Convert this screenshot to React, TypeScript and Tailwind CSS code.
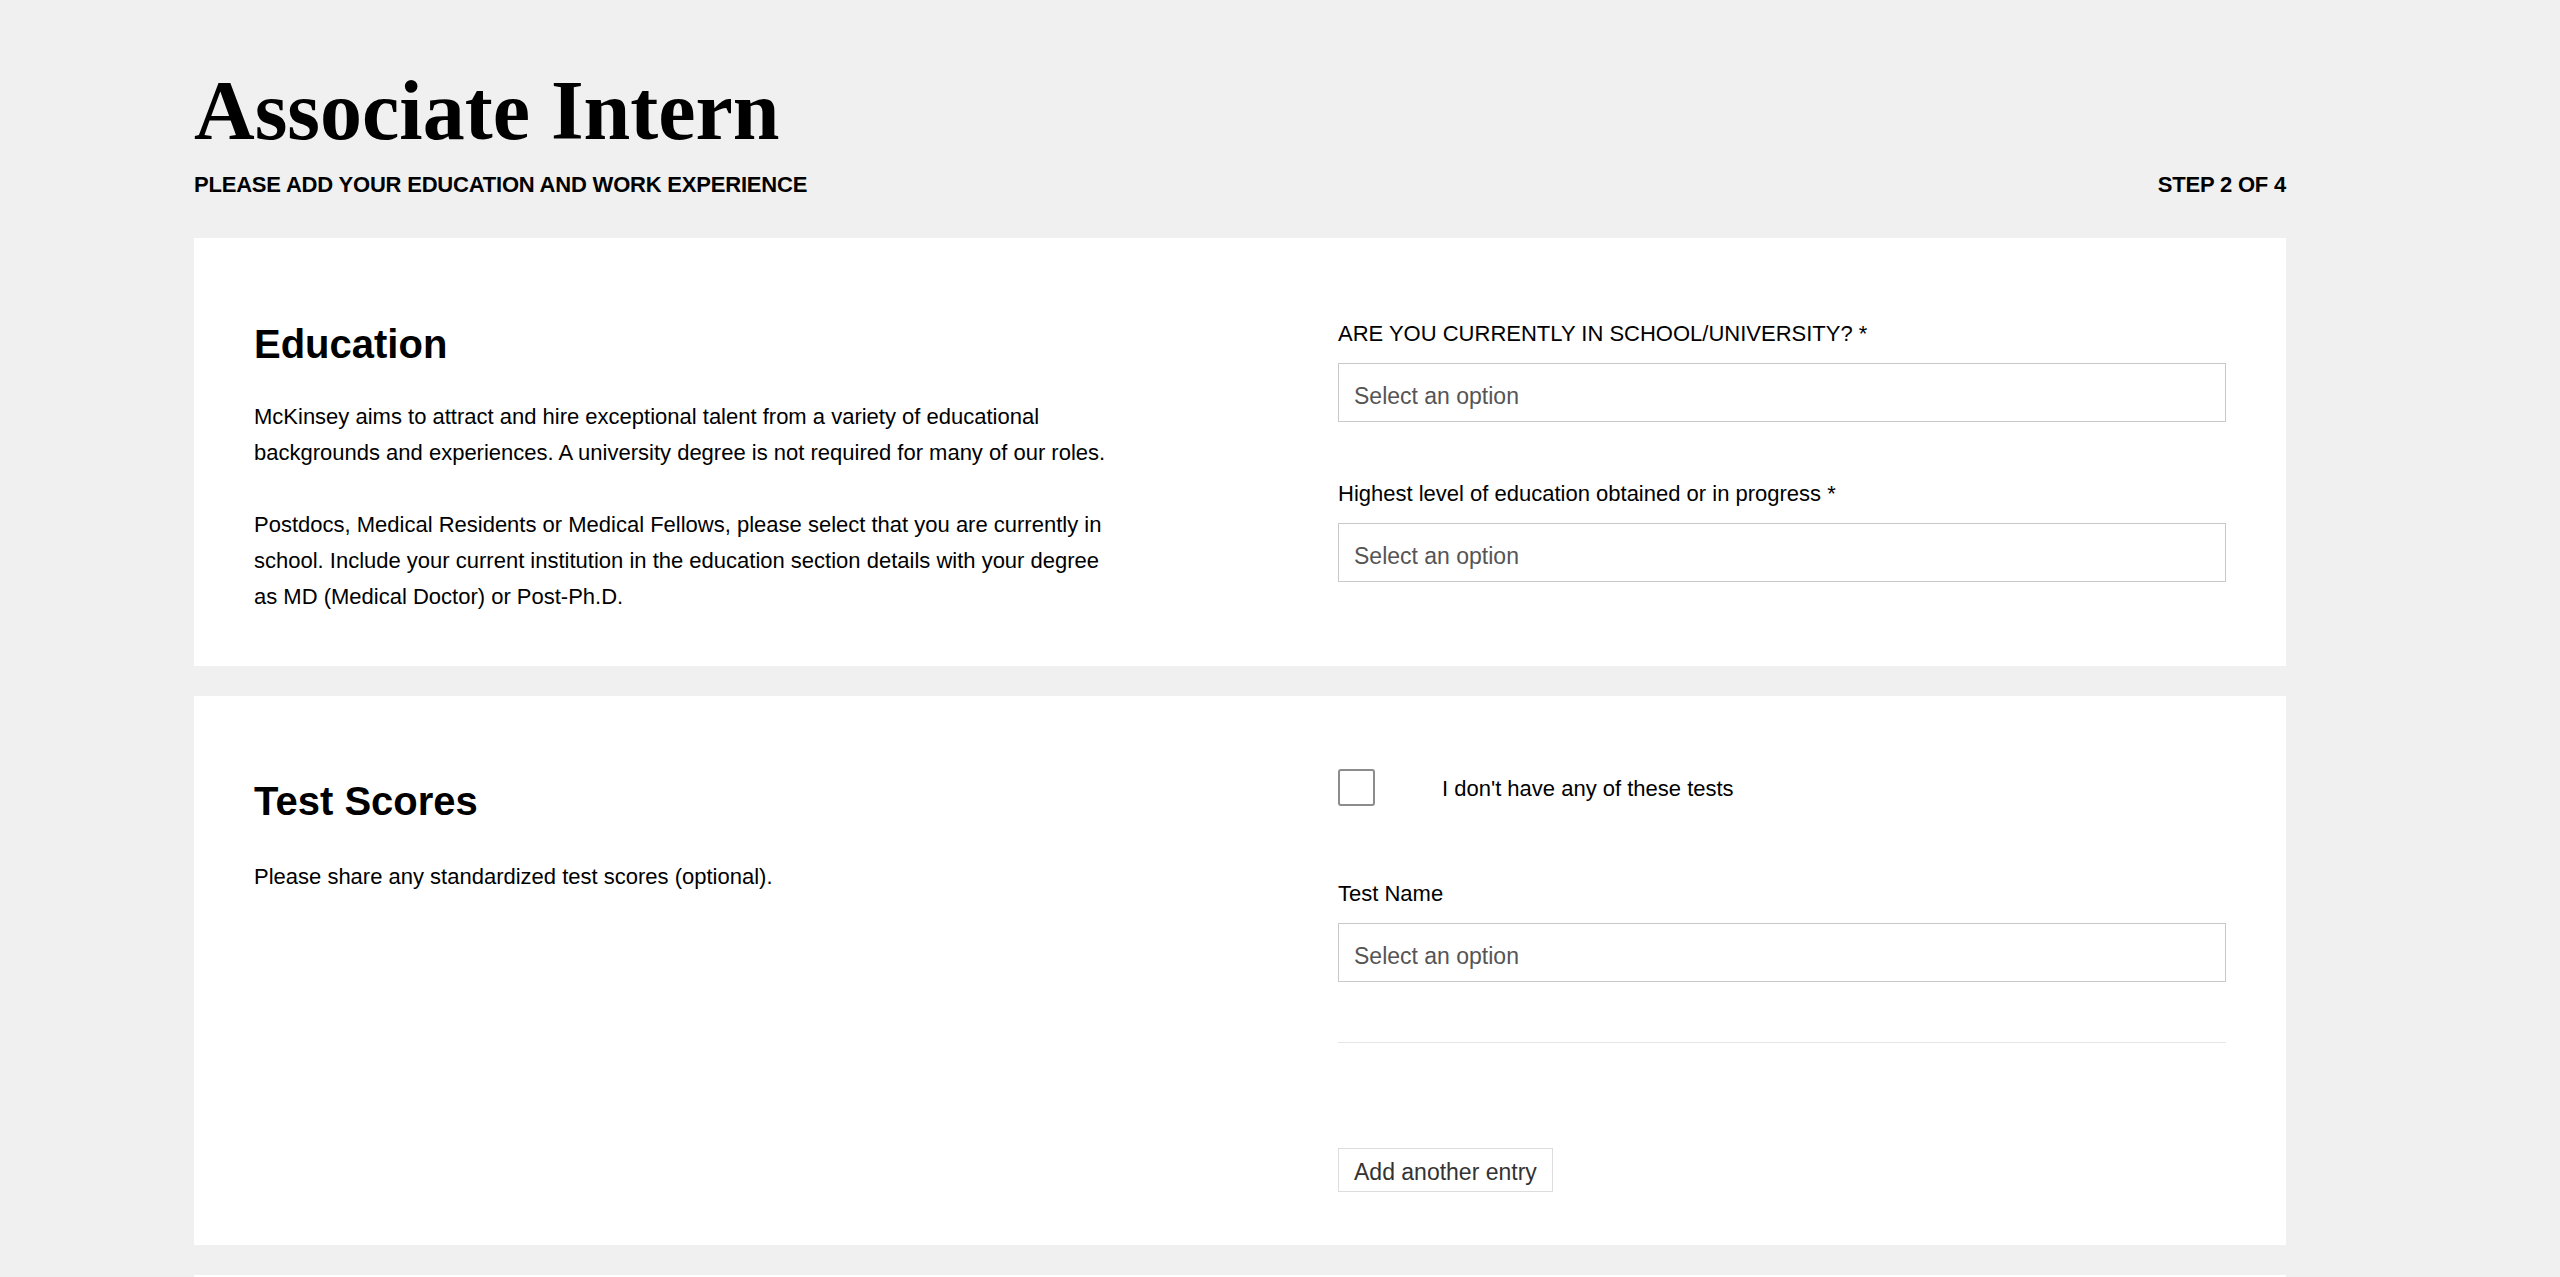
import React from "react";

function Label({ children }: { children: React.ReactNode }) {
  return <div className="text-[22px] leading-[28px] text-black mb-[15px]">{children}</div>;
}

function SelectBox() {
  return (
    <div className="h-[59px] box-border border border-[#c8c8c8] bg-white pl-[15px] pt-[18px] text-[23px] leading-[28px] text-[#555555]">
      Select an option
    </div>
  );
}

export default function App() {
  return (
    <div className="min-h-screen bg-[#f0f0f0] font-['Liberation_Sans',Arial,sans-serif] text-black">
      <div className="pl-[194px] pr-[274px] pt-[69px] pb-[40px]">
        <h1 className="font-['Liberation_Serif','Times_New_Roman',serif] font-bold text-[84px] leading-[84px]">
          Associate Intern
        </h1>
        <div className="mt-[18px] flex justify-between text-[22px] leading-[28px] font-bold tracking-[-0.2px]">
          <span>PLEASE ADD YOUR EDUCATION AND WORK EXPERIENCE</span>
          <span>STEP 2 OF 4</span>
        </div>

        <section className="mt-[39px] bg-white px-[60px] pt-[82px] pb-[51px] grid grid-cols-[888px_888px] justify-between items-start">
          <div>
            <h2 className="text-[40px] leading-[48px] font-bold">Education</h2>
            <p className="mt-[31px] text-[22px] leading-[36px] whitespace-nowrap">
              McKinsey aims to attract and hire exceptional talent from a variety of educational
              <br />
              backgrounds and experiences. A university degree is not required for many of our roles.
            </p>
            <p className="mt-[36px] text-[22px] leading-[36px] whitespace-nowrap">
              Postdocs, Medical Residents or Medical Fellows, please select that you are currently in
              <br />
              school. Include your current institution in the education section details with your degree
              <br />
              as MD (Medical Doctor) or Post-Ph.D.
            </p>
          </div>
          <div>
            <Label>ARE YOU CURRENTLY IN SCHOOL/UNIVERSITY? *</Label>
            <SelectBox />
            <div className="mt-[58px]">
              <Label>Highest level of education obtained or in progress *</Label>
              <SelectBox />
            </div>
          </div>
        </section>

        <section className="mt-[30px] bg-white px-[60px] pt-[73px] pb-[53px] grid grid-cols-[888px_888px] justify-between items-start">
          <div className="pt-[8px]">
            <h2 className="text-[40px] leading-[48px] font-bold">Test Scores</h2>
            <p className="mt-[34px] text-[22px] leading-[36px]">
              Please share any standardized test scores (optional).
            </p>
          </div>
          <div>
            <div className="flex items-center gap-[67px] h-[37px]">
              <div className="w-[37px] h-[37px] box-border border-2 border-[#8c8c8c] rounded-[3px] bg-white shrink-0" />
              <span className="text-[22px] leading-[28px] pt-[2px]">I don't have any of these tests</span>
            </div>
            <div className="mt-[74px]">
              <Label>Test Name</Label>
              <SelectBox />
            </div>
            <div className="mt-[60px] h-px bg-[#e6e6e6]" />
            <div className="mt-[105px]">
              <button
                type="button"
                className="h-[44px] box-border border border-[#dcdcdc] bg-white px-[15px] pt-[3px] text-[23px] leading-[28px] text-[#333333]"
              >
                Add another entry
              </button>
            </div>
          </div>
        </section>

        <section className="mt-[30px] bg-white h-[300px]" />
      </div>
    </div>
  );
}
